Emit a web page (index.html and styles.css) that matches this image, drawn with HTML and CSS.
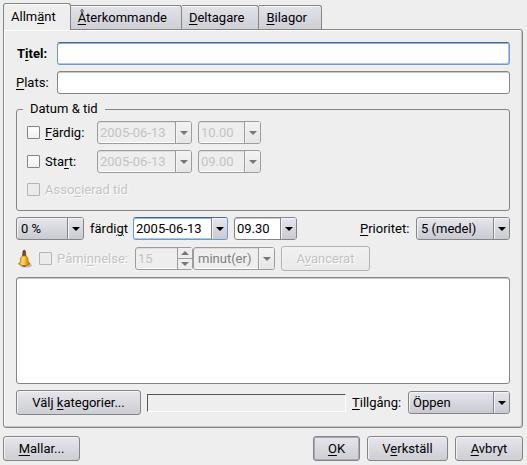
FILE: index.html
```html
<!DOCTYPE html>
<html lang="sv">
<head>
<meta charset="utf-8">
<meta name="viewport" content="width=device-width, initial-scale=1">
<title>Allmänt</title>
<link rel="stylesheet" href="styles.css">
</head>
<body>
<form class="dialog">
  <div class="tabs" role="tablist">
    <button type="button" role="tab" aria-selected="true" class="tab tab-active">Allm<u>ä</u>nt</button>
    <button type="button" role="tab" class="tab"><u>Å</u>terkommande</button>
    <button type="button" role="tab" class="tab"><u>D</u>eltagare</button>
    <button type="button" role="tab" class="tab"><u>B</u>ilagor</button>
  </div>
  <main class="panel">
    <div class="field">
      <label class="strong" for="title">T<u>i</u>tel:</label>
      <input class="box text focused" id="title" type="text">
    </div>
    <div class="field">
      <label for="place"><u>P</u>lats:</label>
      <input class="box text" id="place" type="text">
    </div>

    <fieldset class="group">
      <legend>Datum &amp; tid</legend>
      <div class="row">
        <label class="check check-date"><input type="checkbox"><span><u>F</u>ärdig:</span></label>
        <div class="box combo date off"><input type="text" value="2005-06-13" aria-label="Färdig datum" disabled><button type="button" class="arrow" aria-label="Välj datum" disabled></button></div>
        <div class="box combo time off"><input type="text" value="10.00" aria-label="Färdig tid" disabled><button type="button" class="arrow" aria-label="Välj tid" disabled></button></div>
      </div>
      <div class="row">
        <label class="check check-date"><input type="checkbox"><span>Sta<u>r</u>t:</span></label>
        <div class="box combo date off"><input type="text" value="2005-06-13" aria-label="Startdatum" disabled><button type="button" class="arrow" aria-label="Välj datum" disabled></button></div>
        <div class="box combo time off"><input type="text" value="09.00" aria-label="Starttid" disabled><button type="button" class="arrow" aria-label="Välj tid" disabled></button></div>
      </div>
      <div class="row">
        <label class="check faded"><input type="checkbox" disabled><span>Asso<u>c</u>ierad tid</span></label>
      </div>
    </fieldset>

    <div class="row">
      <div class="box combo raised percent"><select id="done"><option>0 %</option></select><span class="arrow"></span></div>
      <label class="done-label" for="done">färdi<u>g</u>t</label>
      <div class="box combo date focused"><input type="text" value="2005-06-13" aria-label="Datum"><button type="button" class="arrow" aria-label="Välj datum"></button></div>
      <div class="box combo time"><input type="text" value="09.30" aria-label="Tid"><button type="button" class="arrow" aria-label="Välj tid"></button></div>
      <label class="push value-label" for="priority"><u>P</u>rioritet:</label>
      <div class="box combo raised priority"><select id="priority"><option>5 (medel)</option></select><span class="arrow"></span></div>
    </div>

    <div class="row">
      <svg class="bell" viewBox="0 0 17 20" aria-hidden="true">
        <defs>
          <linearGradient id="brass" x1="0" x2="1">
            <stop offset="0" stop-color="#e88a08"/><stop offset=".4" stop-color="#ffe868"/><stop offset=".6" stop-color="#ffb01c"/><stop offset="1" stop-color="#b85204"/>
          </linearGradient>
        </defs>
        <ellipse cx="10" cy="16.500" rx="6" ry="2" fill="#b9b9c0"/>
        <path d="M7 2q1.200-2 2.400 0l.6 6H6.400z" fill="#7c4a20" stroke="#5c3010" stroke-width=".6"/>
        <path d="M4.800 8.500Q8.200 5 11.600 8.500L12.200 12.500 14.200 15Q8.200 18.500 2.500 15L4.300 12.500z" fill="url(#brass)" stroke="#b86408" stroke-width=".7"/>
        <path d="M6.200 16.400Q8.200 19 10.200 16.400z" fill="#803008"/>
      </svg>
      <label class="check check-reminder faded"><input type="checkbox" disabled><span>Påmi<u>n</u>nelse:</span></label>
      <div class="spin-pair">
        <div class="box combo spin off"><input type="text" value="15" aria-label="Påminnelse" disabled><span class="steps"><button type="button" class="step up" aria-label="Öka" disabled></button><button type="button" class="step down" aria-label="Minska" disabled></button></span></div>
        <div class="box combo raised unit off"><select aria-label="Enhet" disabled><option>minut(er)</option></select><span class="arrow"></span></div>
      </div>
      <button type="button" class="btn btn-advanced" disabled>A<u>v</u>ancerat</button>
    </div>

    <textarea class="box notes" aria-label="Beskrivning"></textarea>

    <div class="row">
      <button type="button" class="btn btn-categories">Välj <u>k</u>ategorier...</button>
      <output class="categories" aria-label="Kategorier"></output>
      <label class="value-label" for="access"><u>T</u>illgång:</label>
      <div class="box combo raised access"><select id="access"><option>Öppen</option></select><span class="arrow"></span></div>
    </div>
  </main>
  <footer class="actions">
    <button type="button" class="btn btn-templates"><u>M</u>allar...</button>
    <button type="submit" class="btn btn-default push"><u>O</u>K</button>
    <button type="button" class="btn btn-apply">V<u>e</u>rkställ</button>
    <button type="button" class="btn btn-cancel"><u>A</u>vbryt</button>
  </footer>
</form>
</body>
</html>
```
FILE: styles.css
```css
* { box-sizing: border-box; }

body {
  margin: 0;
  background: #eee;
  color: #000;
  font: 13px/18px Roboto, "Noto Sans", sans-serif;
}

button, input, select, textarea { font: inherit; color: inherit; margin: 0; }
label { white-space: nowrap; }
u { text-decoration-thickness: 1px; text-underline-offset: 2px; }

.dialog { padding: 3px 4px 4px 3px; }

/* Tabs */
.tabs { display: flex; align-items: flex-end; }

.tab {
  height: 24px;
  padding: 0 14px 0 7px;
  border: 1px solid #858585;
  border-bottom: 0;
  border-left: 0;
  border-radius: 0 3px 0 0;
  background: linear-gradient(#e2e2e9, #cfcfd6);
  box-shadow: inset 0 1px #f4f4f7;
}

.tab-active {
  position: relative;
  height: 27px;
  margin-bottom: -1px;
  border-left: 1px solid #858585;
  border-radius: 3px 3px 0 0;
  background: #eee;
  box-shadow: inset 0 1px #fff;
}

.panel {
  display: flex;
  flex-direction: column;
  gap: 6px;
  padding: 12px;
  border: 1px solid #858585;
  border-radius: 0 3px 3px 3px;
  box-shadow: inset 1px 1px #fff, inset -1px -1px #c4c4c4;
}

/* Shared controls */
.box {
  height: 23px;
  border: 1px solid #858585;
  border-radius: 3px;
  background: #fff;
  box-shadow: inset 0 1px #c8c8c8;
  outline: 0;
}

.focused {
  border-color: #6e9bcb;
  border-top-color: #47678b;
  box-shadow: inset 0 1px #8fb2d8, inset -1px -1px #a9c8ea;
}

.field { display: flex; align-items: center; height: 23px; }
.field label { width: 41px; }
.field .text { flex: 1; min-width: 0; padding: 0 3px; }
.strong { padding-left: 1px; font-weight: bold; }

.row { display: flex; align-items: center; gap: 6px; }
.push { margin-left: auto; }

.combo { position: relative; display: flex; flex-shrink: 0; }

.combo input, .combo select {
  flex: 1;
  width: 0;
  min-width: 0;
  padding: 0 2px;
  border: 0;
  background: none;
  outline: 0;
  appearance: none;
}

.combo select { padding: 0 17px 0 4px; opacity: 1; }

.arrow {
  display: grid;
  place-items: center;
  width: 16px;
  padding: 0;
  border: 0;
  border-left: 1px solid #858585;
  border-radius: 0 2px 2px 0;
  background: linear-gradient(#e6e6ee, #c9c9d1);
  box-shadow: inset 1px 1px #f4f4f8;
}

span.arrow {
  position: absolute;
  inset: 0 0 0 auto;
  pointer-events: none;
}

.arrow::after, .step::after {
  content: "";
  border: 4px solid transparent;
  border-top-color: #000;
  border-bottom: 0;
}

.raised {
  background: linear-gradient(#e6e6ee, #c9c9d1);
  box-shadow: inset 1px 1px #f4f4f8;
}

.off {
  border-color: #9c9c9c;
  background: #eee;
  color: #c3c3c3;
  box-shadow: inset 0 1px #dcdcdc, inset -1px -1px #fff;
}

.off .arrow { border-color: #9c9c9c; background: linear-gradient(#f3f3f3, #e5e5e5); }
.off .arrow::after { border-top-color: #777; }
.off select { color: #808080; }

.date { width: 95px; }
.time { width: 63px; }
.percent { width: 68px; }
.priority { width: 94px; }
.access { width: 102px; }
.spin { width: 58px; }
.unit { width: 82px; }
.done-label { width: 37px; }
.value-label { width: 50px; }

.check { display: flex; align-items: center; gap: 5px; }

.check input {
  appearance: none;
  flex: none;
  width: 13px;
  height: 13px;
  border: 1px solid #858585;
  border-radius: 1px;
  background: linear-gradient(#fff, #f0f0f0);
}

.check-date { width: 64px; }
.check-reminder { width: 90px; }
.faded { color: #c3c3c3; text-shadow: 1px 1px #fff; }
.check.faded input { border-color: #b4b4b4; background: #ebebeb; }

.btn {
  height: 25px;
  padding: 0 12px;
  border: 1px solid #858585;
  border-radius: 3px;
  background: linear-gradient(#e6e6ec, #cdcdd4);
  box-shadow: inset 1px 1px #f3f3f7;
  white-space: nowrap;
}

.btn:disabled {
  border-color: #b2b2b2;
  background: linear-gradient(#f1f1f1, #e9e9e9);
  color: #c3c3c3;
  text-shadow: 1px 1px #fff;
}

/* Date and time group */
.group {
  display: flex;
  flex-direction: column;
  gap: 6px;
  min-width: 0;
  margin: 0;
  padding: 3px 10px 10px;
  border: 1px solid #858585;
  border-radius: 3px;
}

.group legend { margin-left: -4px; padding: 0 7px; }
.group .row:last-child { height: 21px; }

/* Reminder row */
.bell { flex: none; width: 17px; height: 20px; }
.spin-pair { display: flex; }

.steps {
  display: flex;
  flex-direction: column;
  width: 15px;
  border-left: 1px solid #9c9c9c;
}

.step {
  display: grid;
  place-items: center;
  flex: 1;
  padding: 0;
  border: 0;
  background: #eee;
}

.step + .step { border-top: 1px solid #9c9c9c; }
.step::after { border-top-color: #777; }
.up::after { transform: rotate(180deg); }

.btn-advanced { width: 89px; }

.notes { display: block; width: 100%; height: 107px; padding: 3px; resize: none; }

.btn-categories { width: 125px; }

.categories {
  flex: 1;
  height: 18px;
  border: 1px solid #fff;
  border-top-color: #555;
  border-left-color: #555;
}

/* Dialog buttons */
.actions { display: flex; gap: 7px; padding-top: 8px; }
.btn-templates { width: 77px; }
.btn-default { width: 47px; box-shadow: inset 0 0 0 1px #aaaab0; }
.btn-apply { width: 81px; }
.btn-cancel { width: 68px; }
```
